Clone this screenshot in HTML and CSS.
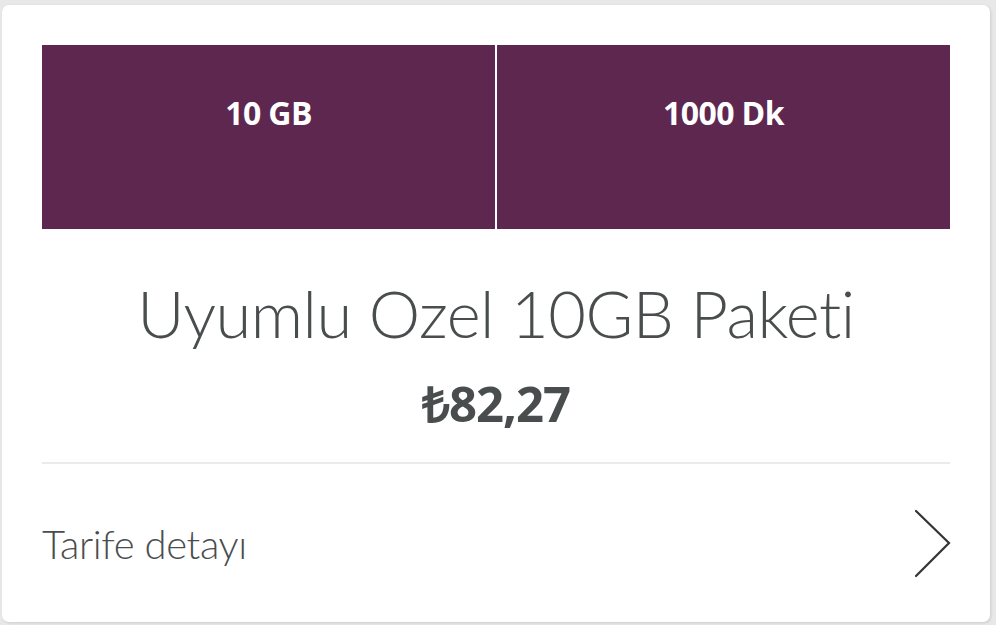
FILE: index.html
```html
<!DOCTYPE html>
<html lang="tr">
<head>
<meta charset="utf-8">
<link rel="stylesheet" href="styles.css">
</head>
<body>
<div class="card">
  <div class="tiles">
    <div class="tile">10 GB</div>
    <div class="tile">1000 Dk</div>
  </div>
  <h1 class="title">Uyumlu Ozel 10GB Paketi</h1>
  <div class="price">₺82,27</div>
  <div class="divider"></div>
  <div class="detail">
    <span class="detail-label">Tarife detayı</span>
    <svg class="chevron" width="40" height="70" viewBox="0 0 40 70" aria-hidden="true">
      <polyline points="3,2 36,34 3,67" fill="none" stroke="#333" stroke-width="2.2" stroke-linecap="round" stroke-linejoin="miter"/>
    </svg>
  </div>
</div>
</body>
</html>
```
FILE: styles.css
```css
html, body {
  margin: 0;
  padding: 0;
}
body {
  background: #e8e8e8;
  width: 996px;
  height: 625px;
  overflow: hidden;
  font-family: Lato, "Open Sans", sans-serif;
  color: #4a4d4e;
}
.card {
  box-sizing: border-box;
  margin: 5px 0 0 2px;
  width: 988px;
  height: 617px;
  background: #fff;
  border-radius: 7px;
  box-shadow: 1px 1px 3px rgba(0,0,0,0.12);
  padding: 40px 40px 0 40px;
  display: flex;
  flex-direction: column;
}
.tiles {
  display: flex;
  gap: 2px;
  height: 184px;
}
.tile {
  flex: 1;
  background: #5e2750;
  color: #fff;
  font-family: "Open Sans", sans-serif;
  font-weight: 700;
  font-size: 32px;
  letter-spacing: -0.6px;
  text-align: center;
  padding-top: 46px;
  line-height: 44px;
  box-sizing: border-box;
}
.title {
  margin: 44px 0 0;
  font-weight: 300;
  font-size: 65px;
  line-height: 80px;
  text-align: center;
  color: #4a4d4e;
  letter-spacing: -0.5px;
}
.price {
  margin-top: 20px;
  font-family: "Open Sans", sans-serif;
  font-weight: 700;
  font-size: 49px;
  line-height: 60px;
  text-align: center;
  letter-spacing: -1px;
}
.divider {
  margin-top: 29px;
  height: 2px;
  background: #ebebeb;
}
.detail {
  display: flex;
  align-items: center;
  justify-content: space-between;
  height: 157px;
  padding-top: 2px;
  box-sizing: border-box;
}
.detail-label {
  font-weight: 300;
  font-size: 40px;
  letter-spacing: -0.4px;
}
.chevron {
  display: block;
  margin-right: -3px;
}
```
